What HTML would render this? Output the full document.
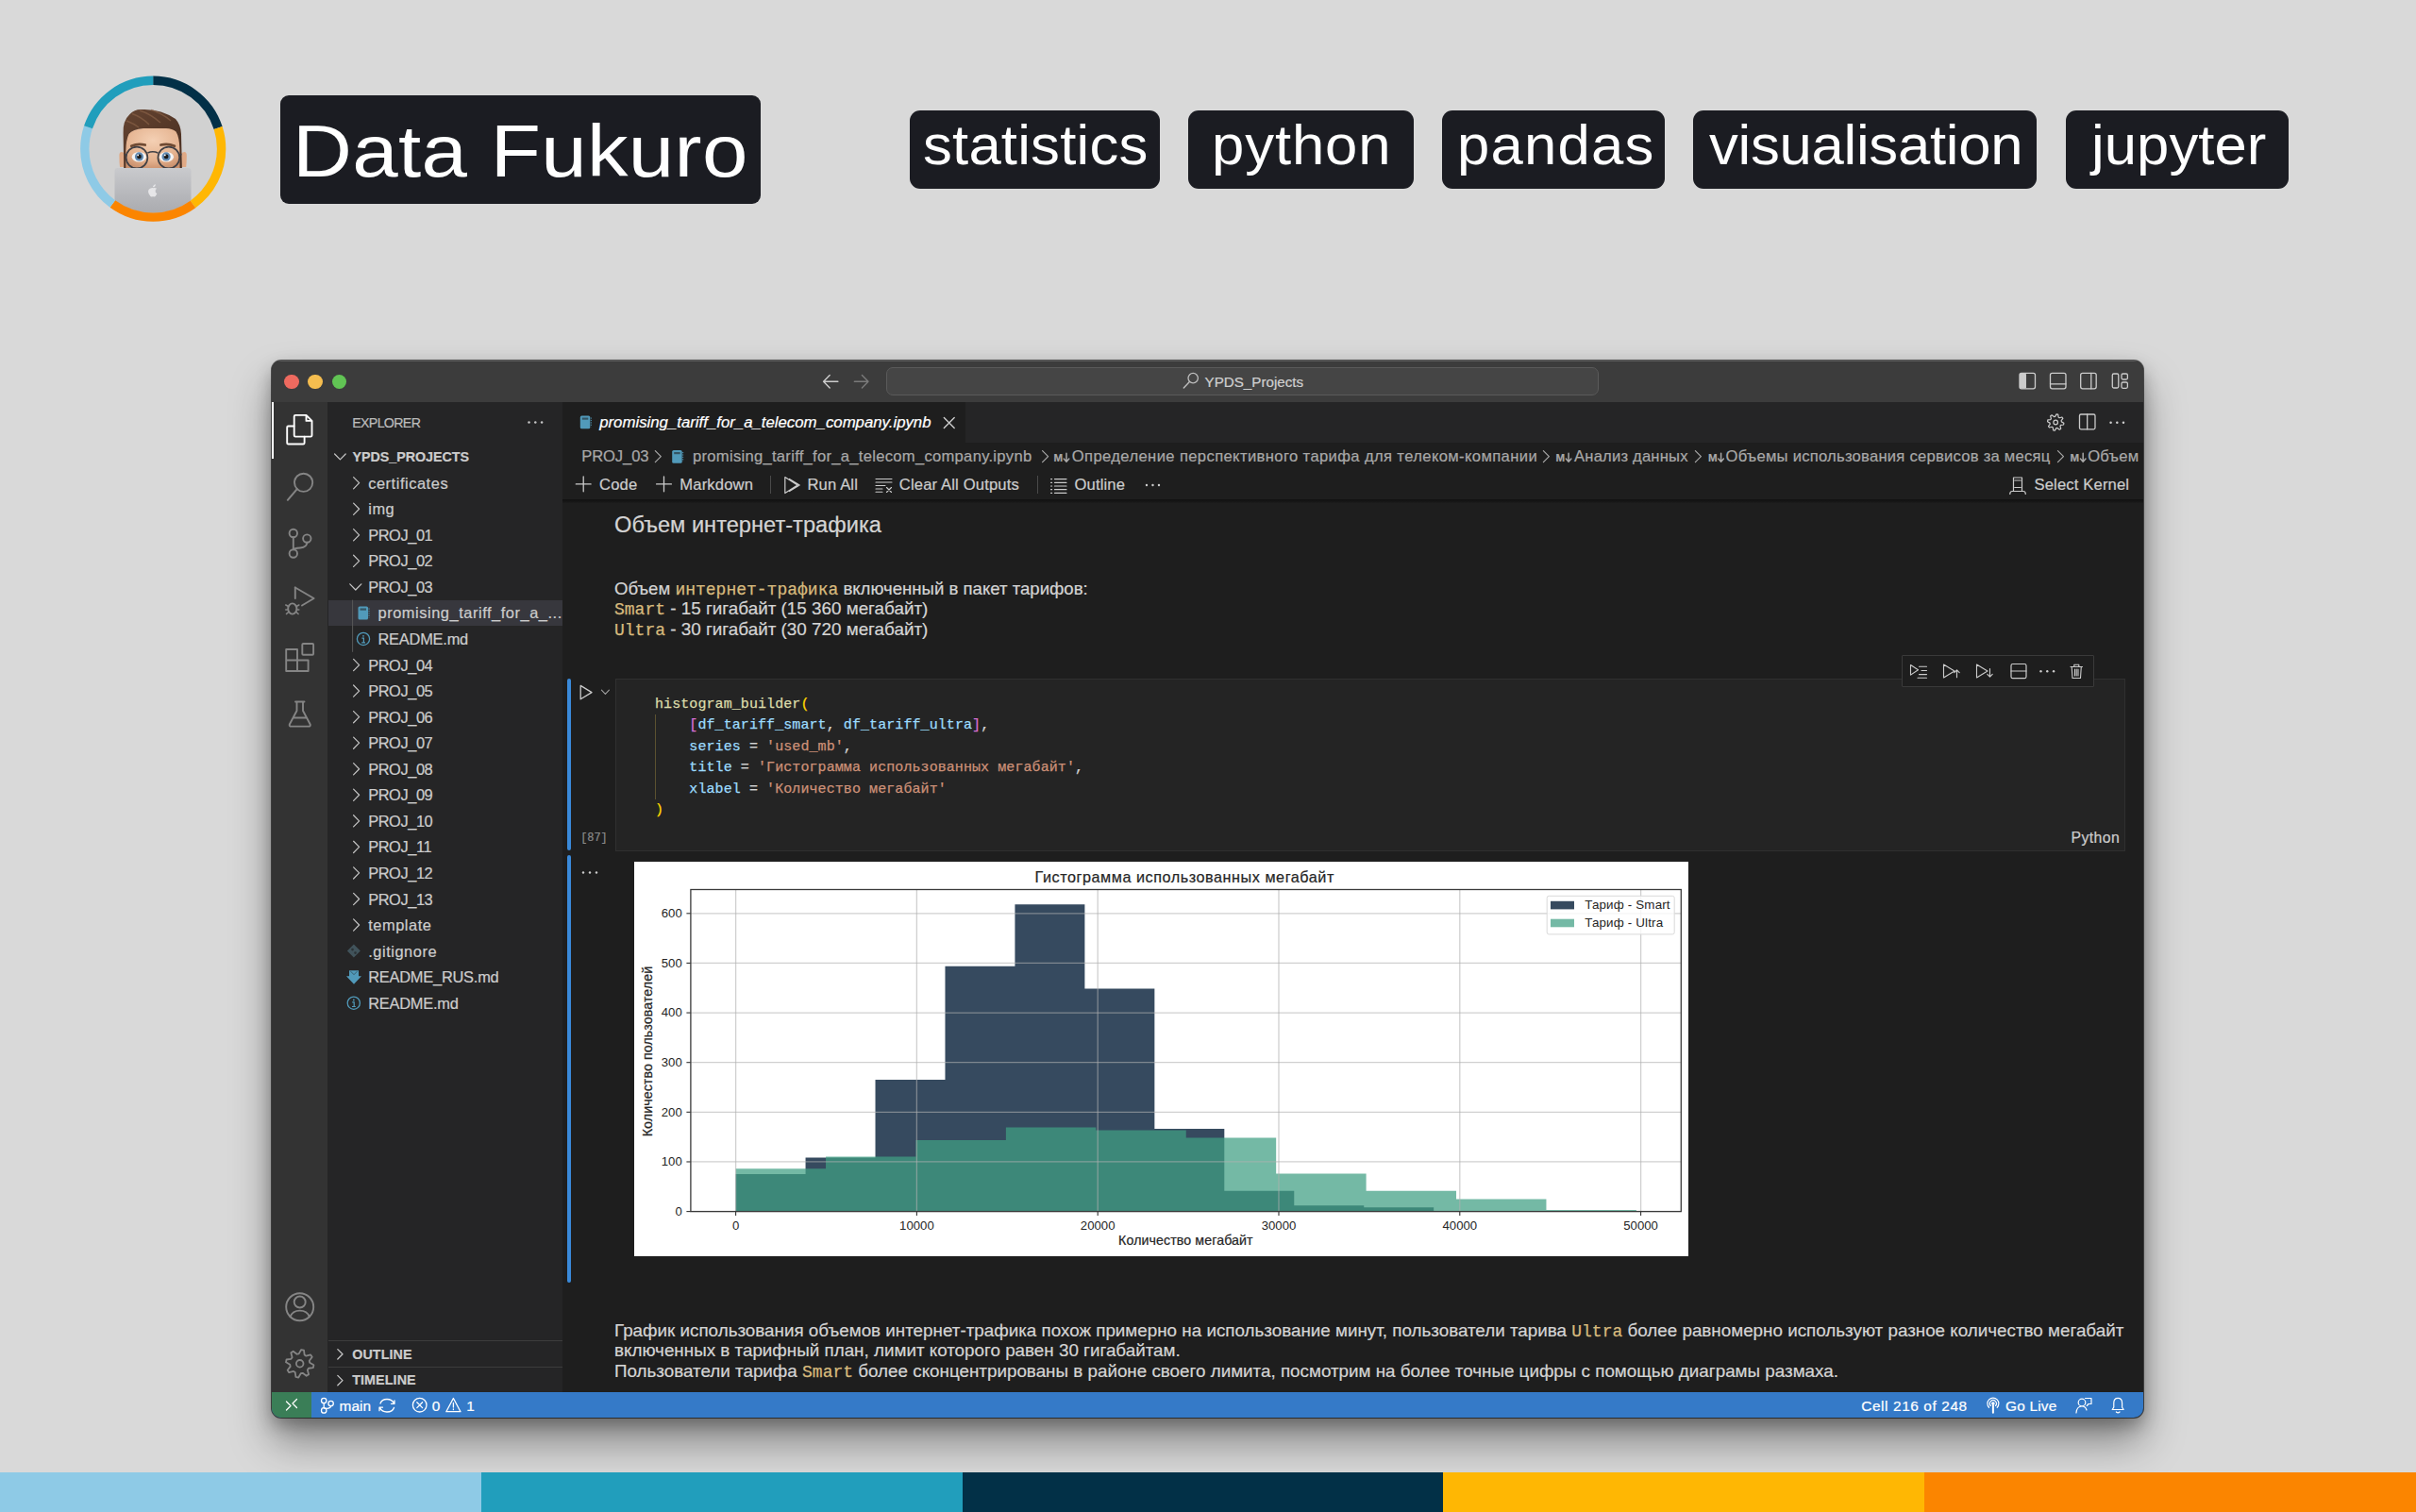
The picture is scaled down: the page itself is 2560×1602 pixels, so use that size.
<!DOCTYPE html>
<html><head><meta charset="utf-8"><title>Data Fukuro</title><style>
*{margin:0;padding:0;box-sizing:border-box}
html,body{width:2560px;height:1602px;overflow:hidden}
body{position:relative;background:#d9d9d9;font-family:'Liberation Sans', sans-serif}
.t{position:absolute;white-space:pre}
#win .t{-webkit-text-stroke:0.22px currentColor}
#win .t.nc{-webkit-text-stroke:0}
#win{position:absolute;left:288px;top:382px;width:1983.2px;height:1120.2px;border-radius:10px;overflow:hidden;background:#1e1e1e;
 box-shadow:0 0 0 1px rgba(0,0,0,0.6), 0 8px 18px rgba(0,0,0,0.28), 0 26px 44px rgba(0,0,0,0.38)}
</style></head>
<body>
<svg style="position:absolute;left:0.00px;top:0.00px;overflow:visible;" width="320" height="260" viewBox="0 0 320 260">
<defs>
 <clipPath id="avclip"><circle cx="162.2" cy="157.7" r="68"/></clipPath>
 <linearGradient id="lap" x1="0" y1="0" x2="0" y2="1"><stop offset="0" stop-color="#c9cacd"/><stop offset="0.55" stop-color="#b3b4b8"/><stop offset="1" stop-color="#a4a5a9"/></linearGradient>
 <radialGradient id="skin" cx="0.5" cy="0.3" r="0.75"><stop offset="0" stop-color="#f4d0b4"/><stop offset="0.7" stop-color="#e3b08c"/><stop offset="1" stop-color="#c98f6c"/></radialGradient>
 <linearGradient id="hair" x1="0" y1="0" x2="1" y2="1"><stop offset="0" stop-color="#654431"/><stop offset="1" stop-color="#472d20"/></linearGradient>
</defs>
<circle cx="162.2" cy="157.7" r="68" fill="#d1d1d1"/>
<g clip-path="url(#avclip)">
 <path d="M126.4 166 Q126 161 129 161 L131.5 162 L131.5 177 L127 177 Q126.4 172 126.4 166 Z" fill="#e0a985"/>
 <path d="M197.8 166 Q198.2 161 195.2 161 L192.5 162 L192.5 177 L197.2 177 Q197.8 172 197.8 166 Z" fill="#e0a985"/>
 <path d="M131.5 178 L131.5 150 Q133 137.5 152 136 L181 136 Q191 137.5 192 150 L192.5 178 Z" fill="url(#skin)"/>
 <path d="M131.2 178 L130.6 141 Q130 128 137.5 121 Q143 115.5 150 116 Q170 115 186 126 Q191.5 132 192 142 L192.8 178 L190.6 178 L190.4 158 Q190 145 186.5 139.5 Q182.5 136 176 136 L152 136 Q140.5 136.8 136.5 142 Q133.6 148 133.3 160 L133.3 178 Z" fill="url(#hair)"/>
 <path d="M140 120.5 Q150 124 158 132 M148 117 Q160 121 170 130 M160 116.5 Q172 120 181 128 M134 128 Q142 131 147 135" stroke="#8b6248" stroke-width="1.5" fill="none" opacity="0.65"/>
 <path d="M139.2 154.8 Q146 151.6 153.8 153.6" stroke="#6f4a32" stroke-width="2.6" fill="none" stroke-linecap="round"/>
 <path d="M170.4 153.6 Q178 151.6 185 154.8" stroke="#6f4a32" stroke-width="2.6" fill="none" stroke-linecap="round"/>
 <ellipse cx="147.3" cy="166.2" rx="7.6" ry="5.2" fill="#f4f4f4"/>
 <ellipse cx="176.4" cy="166.2" rx="7.6" ry="5.2" fill="#f4f4f4"/>
 <circle cx="147.5" cy="165.9" r="4.6" fill="#5f88b0"/>
 <circle cx="176.1" cy="165.9" r="4.6" fill="#5f88b0"/>
 <circle cx="147.5" cy="165.9" r="2.4" fill="#1a1a1a"/>
 <circle cx="176.1" cy="165.9" r="2.4" fill="#1a1a1a"/>
 <circle cx="146.2" cy="164.4" r="0.9" fill="#ffffff"/>
 <circle cx="174.8" cy="164.4" r="0.9" fill="#ffffff"/>
 <circle cx="145" cy="167" r="11.4" fill="none" stroke="#404045" stroke-width="1.7"/>
 <circle cx="178.8" cy="167" r="11.4" fill="none" stroke="#404045" stroke-width="1.7"/>
 <path d="M156.4 162 Q161.9 159.6 167.4 162 M133.6 164 L131.5 163.5 M190.2 164 L192.5 163.5" stroke="#404045" stroke-width="1.6" fill="none"/>
 <path d="M121.5 238 V181 Q121.5 178 124.5 178 H199.5 Q202.5 178 202.5 181 V238 Z" fill="url(#lap)"/>
 <path d="M161.8 197.5 Q163.5 195.3 165 195.2 Q165 197.2 163 198.6 Z M159 199.8 Q161.5 198.6 162.5 199.3 Q163.8 198.6 166 199.5 Q164 201.3 164.8 203.8 Q166 205 166.3 205.3 Q165 208.5 163.3 208.5 Q162.5 208 161.6 208.2 Q160.2 208.7 159.4 208 Q157 205.6 157 202.8 Q157.3 200.5 159 199.8 Z" fill="#e6e6e8"/>
</g>
<circle cx="162.2" cy="157.7" r="72.4" fill="none" stroke="#023047" stroke-width="9.4" stroke-dasharray="90.981 363.922" stroke-dashoffset="0.000" transform="rotate(-90 162.2 157.7)"/><circle cx="162.2" cy="157.7" r="72.4" fill="none" stroke="#ffb703" stroke-width="9.4" stroke-dasharray="90.981 363.922" stroke-dashoffset="-90.981" transform="rotate(-90 162.2 157.7)"/><circle cx="162.2" cy="157.7" r="72.4" fill="none" stroke="#fb8500" stroke-width="9.4" stroke-dasharray="90.981 363.922" stroke-dashoffset="-181.961" transform="rotate(-90 162.2 157.7)"/><circle cx="162.2" cy="157.7" r="72.4" fill="none" stroke="#8ecae6" stroke-width="9.4" stroke-dasharray="90.981 363.922" stroke-dashoffset="-272.942" transform="rotate(-90 162.2 157.7)"/><circle cx="162.2" cy="157.7" r="72.4" fill="none" stroke="#219ebc" stroke-width="9.4" stroke-dasharray="90.981 363.922" stroke-dashoffset="-363.922" transform="rotate(-90 162.2 157.7)"/>
</svg><div style="position:absolute;left:297.00px;top:101.00px;width:509.00px;height:115.00px;background:#1b1c22;border-radius:9px"></div><div class="t " style="left:309.60px;top:121.17px;font-size:78px;line-height:78px;color:#ffffff;font-family:'Liberation Sans', sans-serif;font-weight:normal;font-style:normal;letter-spacing:0.3px;transform:scaleX(1.116);transform-origin:0 0">Data Fukuro</div><div style="position:absolute;left:964.00px;top:117.00px;width:265.00px;height:83.00px;background:#1b1c22;border-radius:11px"></div><div class="t " style="left:978.10px;top:125.26px;font-size:59px;line-height:59px;color:#ffffff;font-family:'Liberation Sans', sans-serif;font-weight:normal;font-style:normal;letter-spacing:0.19999999999999996px;transform:scaleX(1.045);transform-origin:0 0">statistics</div><div style="position:absolute;left:1259.00px;top:117.00px;width:239.00px;height:83.00px;background:#1b1c22;border-radius:11px"></div><div class="t " style="left:1284.10px;top:125.26px;font-size:59px;line-height:59px;color:#ffffff;font-family:'Liberation Sans', sans-serif;font-weight:normal;font-style:normal;letter-spacing:0.8500000000000001px;transform:scaleX(1.045);transform-origin:0 0">python</div><div style="position:absolute;left:1528.00px;top:117.00px;width:236.00px;height:83.00px;background:#1b1c22;border-radius:11px"></div><div class="t " style="left:1543.90px;top:125.26px;font-size:59px;line-height:59px;color:#ffffff;font-family:'Liberation Sans', sans-serif;font-weight:normal;font-style:normal;letter-spacing:1.15px;transform:scaleX(1.045);transform-origin:0 0">pandas</div><div style="position:absolute;left:1794.00px;top:117.00px;width:364.00px;height:83.00px;background:#1b1c22;border-radius:11px"></div><div class="t " style="left:1811.00px;top:125.26px;font-size:59px;line-height:59px;color:#ffffff;font-family:'Liberation Sans', sans-serif;font-weight:normal;font-style:normal;letter-spacing:-0.27px;transform:scaleX(1.045);transform-origin:0 0">visualisation</div><div style="position:absolute;left:2189.00px;top:117.00px;width:236.00px;height:83.00px;background:#1b1c22;border-radius:11px"></div><div class="t " style="left:2216.00px;top:125.26px;font-size:59px;line-height:59px;color:#ffffff;font-family:'Liberation Sans', sans-serif;font-weight:normal;font-style:normal;letter-spacing:0.050000000000000044px;transform:scaleX(1.045);transform-origin:0 0">jupyter</div>
<div id="win">
<div style="position:absolute;left:0.00px;top:0.00px;width:1983.20px;height:43.50px;background:#3c3c3c"></div><div style="position:absolute;left:0.00px;top:0.00px;width:1983.20px;height:1.20px;background:#5c5c5c"></div><div style="position:absolute;left:13.40px;top:14.50px;width:15.40px;height:15.40px;background:#ee6a5f;border-radius:50%"></div><div style="position:absolute;left:38.30px;top:14.50px;width:15.40px;height:15.40px;background:#f5bd4f;border-radius:50%"></div><div style="position:absolute;left:63.50px;top:14.50px;width:15.40px;height:15.40px;background:#61c454;border-radius:50%"></div><div style="position:absolute;left:0.00px;top:43.50px;width:60.00px;height:1049.50px;background:#333333"></div><div style="position:absolute;left:-0.30px;top:43.50px;width:2.50px;height:60.00px;background:#ffffff"></div><div style="position:absolute;left:59.00px;top:43.50px;width:249.00px;height:1049.50px;background:#252526"></div><div style="position:absolute;left:308.00px;top:43.50px;width:1675.20px;height:1049.50px;background:#1e1e1e"></div><div style="position:absolute;left:308.00px;top:43.50px;width:1675.20px;height:43.75px;background:#252526"></div><div style="position:absolute;left:308.00px;top:43.50px;width:427.00px;height:43.75px;background:#1e1e1e"></div><div style="position:absolute;left:0.00px;top:1093.00px;width:1983.20px;height:27.20px;background:#357ac8"></div><div style="position:absolute;left:0.00px;top:1093.00px;width:42.00px;height:27.20px;background:#3a7e57"></div><div style="position:absolute;left:651.00px;top:6.90px;width:755.00px;height:29.80px;background:#454545;border:1px solid #5a5a5a;border-radius:7px"></div><div class="t " style="left:988.50px;top:14.73px;font-size:15.2px;line-height:15.2px;color:#cfcfcf;font-family:'Liberation Sans', sans-serif;font-weight:normal;font-style:normal;letter-spacing:0px;">YPDS_Projects</div><div class="t " style="left:85.20px;top:59.08px;font-size:14.2px;line-height:14.2px;color:#bbbbbb;font-family:'Liberation Sans', sans-serif;font-weight:normal;font-style:normal;letter-spacing:-0.65px;">EXPLORER</div><div class="t " style="left:85.60px;top:94.80px;font-size:14.3px;line-height:14.3px;color:#cccccc;font-family:'Liberation Sans', sans-serif;font-weight:bold;font-style:normal;letter-spacing:-0.05px;">YPDS_PROJECTS</div><div style="position:absolute;left:60.00px;top:253.65px;width:248.00px;height:27.60px;background:#37373d"></div><div class="t " style="left:102.20px;top:121.72px;font-size:16.4px;line-height:16.4px;color:#cccccc;font-family:'Liberation Sans', sans-serif;font-weight:normal;font-style:normal;letter-spacing:0.55px;">certificates</div><div class="t " style="left:102.20px;top:149.27px;font-size:16.4px;line-height:16.4px;color:#cccccc;font-family:'Liberation Sans', sans-serif;font-weight:normal;font-style:normal;letter-spacing:0.55px;">img</div><div class="t " style="left:102.20px;top:176.82px;font-size:16.4px;line-height:16.4px;color:#cccccc;font-family:'Liberation Sans', sans-serif;font-weight:normal;font-style:normal;letter-spacing:-0.42px;">PROJ_01</div><div class="t " style="left:102.20px;top:204.37px;font-size:16.4px;line-height:16.4px;color:#cccccc;font-family:'Liberation Sans', sans-serif;font-weight:normal;font-style:normal;letter-spacing:-0.42px;">PROJ_02</div><div class="t " style="left:102.20px;top:231.92px;font-size:16.4px;line-height:16.4px;color:#cccccc;font-family:'Liberation Sans', sans-serif;font-weight:normal;font-style:normal;letter-spacing:-0.42px;">PROJ_03</div><div class="t " style="left:112.50px;top:259.47px;font-size:16.4px;line-height:16.4px;color:#cccccc;font-family:'Liberation Sans', sans-serif;font-weight:normal;font-style:normal;letter-spacing:0.55px;">promising_tariff_for_a_...</div><div class="t " style="left:112.50px;top:287.02px;font-size:16.4px;line-height:16.4px;color:#cccccc;font-family:'Liberation Sans', sans-serif;font-weight:normal;font-style:normal;letter-spacing:-0.22px;">README.md</div><div class="t " style="left:102.20px;top:314.57px;font-size:16.4px;line-height:16.4px;color:#cccccc;font-family:'Liberation Sans', sans-serif;font-weight:normal;font-style:normal;letter-spacing:-0.42px;">PROJ_04</div><div class="t " style="left:102.20px;top:342.12px;font-size:16.4px;line-height:16.4px;color:#cccccc;font-family:'Liberation Sans', sans-serif;font-weight:normal;font-style:normal;letter-spacing:-0.42px;">PROJ_05</div><div class="t " style="left:102.20px;top:369.67px;font-size:16.4px;line-height:16.4px;color:#cccccc;font-family:'Liberation Sans', sans-serif;font-weight:normal;font-style:normal;letter-spacing:-0.42px;">PROJ_06</div><div class="t " style="left:102.20px;top:397.22px;font-size:16.4px;line-height:16.4px;color:#cccccc;font-family:'Liberation Sans', sans-serif;font-weight:normal;font-style:normal;letter-spacing:-0.42px;">PROJ_07</div><div class="t " style="left:102.20px;top:424.77px;font-size:16.4px;line-height:16.4px;color:#cccccc;font-family:'Liberation Sans', sans-serif;font-weight:normal;font-style:normal;letter-spacing:-0.42px;">PROJ_08</div><div class="t " style="left:102.20px;top:452.32px;font-size:16.4px;line-height:16.4px;color:#cccccc;font-family:'Liberation Sans', sans-serif;font-weight:normal;font-style:normal;letter-spacing:-0.42px;">PROJ_09</div><div class="t " style="left:102.20px;top:479.87px;font-size:16.4px;line-height:16.4px;color:#cccccc;font-family:'Liberation Sans', sans-serif;font-weight:normal;font-style:normal;letter-spacing:-0.42px;">PROJ_10</div><div class="t " style="left:102.20px;top:507.42px;font-size:16.4px;line-height:16.4px;color:#cccccc;font-family:'Liberation Sans', sans-serif;font-weight:normal;font-style:normal;letter-spacing:-0.42px;">PROJ_11</div><div class="t " style="left:102.20px;top:534.97px;font-size:16.4px;line-height:16.4px;color:#cccccc;font-family:'Liberation Sans', sans-serif;font-weight:normal;font-style:normal;letter-spacing:-0.42px;">PROJ_12</div><div class="t " style="left:102.20px;top:562.52px;font-size:16.4px;line-height:16.4px;color:#cccccc;font-family:'Liberation Sans', sans-serif;font-weight:normal;font-style:normal;letter-spacing:-0.42px;">PROJ_13</div><div class="t " style="left:102.20px;top:590.07px;font-size:16.4px;line-height:16.4px;color:#cccccc;font-family:'Liberation Sans', sans-serif;font-weight:normal;font-style:normal;letter-spacing:0.55px;">template</div><div class="t " style="left:102.20px;top:617.62px;font-size:16.4px;line-height:16.4px;color:#cccccc;font-family:'Liberation Sans', sans-serif;font-weight:normal;font-style:normal;letter-spacing:0.55px;">.gitignore</div><div class="t " style="left:102.20px;top:645.17px;font-size:16.4px;line-height:16.4px;color:#cccccc;font-family:'Liberation Sans', sans-serif;font-weight:normal;font-style:normal;letter-spacing:-0.22px;">README_RUS.md</div><div class="t " style="left:102.20px;top:672.72px;font-size:16.4px;line-height:16.4px;color:#cccccc;font-family:'Liberation Sans', sans-serif;font-weight:normal;font-style:normal;letter-spacing:-0.22px;">README.md</div><div style="position:absolute;left:60.00px;top:1038.00px;width:248.00px;height:1.00px;background:#3c3c3c"></div><div style="position:absolute;left:60.00px;top:1066.00px;width:248.00px;height:1.00px;background:#3c3c3c"></div><div class="t " style="left:85.20px;top:1045.70px;font-size:14.3px;line-height:14.3px;color:#cccccc;font-family:'Liberation Sans', sans-serif;font-weight:bold;font-style:normal;letter-spacing:0.1px;">OUTLINE</div><div class="t " style="left:85.20px;top:1073.40px;font-size:14.3px;line-height:14.3px;color:#cccccc;font-family:'Liberation Sans', sans-serif;font-weight:bold;font-style:normal;letter-spacing:0.1px;">TIMELINE</div><div class="t " style="left:347.20px;top:58.08px;font-size:16.8px;line-height:16.8px;color:#ffffff;font-family:'Liberation Sans', sans-serif;font-weight:normal;font-style:italic;letter-spacing:0.0px;">promising_tariff_for_a_telecom_company.ipynb</div><div class="t " style="left:328.20px;top:93.75px;font-size:16.6px;line-height:16.6px;color:#a8a8a8;font-family:'Liberation Sans', sans-serif;font-weight:normal;font-style:normal;letter-spacing:-0.1px;">PROJ_03</div><div class="t " style="left:446.00px;top:93.75px;font-size:16.6px;line-height:16.6px;color:#a8a8a8;font-family:'Liberation Sans', sans-serif;font-weight:normal;font-style:normal;letter-spacing:0.28px;">promising_tariff_for_a_telecom_company.ipynb</div><div class="t " style="left:828.40px;top:97.57px;font-size:11.5px;line-height:11.5px;color:#a8a8a8;font-family:'Liberation Sans', sans-serif;font-weight:bold;font-style:normal;letter-spacing:0px;">M</div><div class="t " style="left:847.80px;top:93.75px;font-size:16.6px;line-height:16.6px;color:#a8a8a8;font-family:'Liberation Sans', sans-serif;font-weight:normal;font-style:normal;letter-spacing:0.38px;">Определение перспективного тарифа для телеком-компании</div><div class="t " style="left:1360.50px;top:97.57px;font-size:11.5px;line-height:11.5px;color:#a8a8a8;font-family:'Liberation Sans', sans-serif;font-weight:bold;font-style:normal;letter-spacing:0px;">M</div><div class="t " style="left:1380.00px;top:93.75px;font-size:16.6px;line-height:16.6px;color:#a8a8a8;font-family:'Liberation Sans', sans-serif;font-weight:normal;font-style:normal;letter-spacing:0.2px;">Анализ данных</div><div class="t " style="left:1522.00px;top:97.57px;font-size:11.5px;line-height:11.5px;color:#a8a8a8;font-family:'Liberation Sans', sans-serif;font-weight:bold;font-style:normal;letter-spacing:0px;">M</div><div class="t " style="left:1540.50px;top:93.75px;font-size:16.6px;line-height:16.6px;color:#a8a8a8;font-family:'Liberation Sans', sans-serif;font-weight:normal;font-style:normal;letter-spacing:0.25px;">Объемы использования сервисов за месяц</div><div class="t " style="left:1905.60px;top:97.57px;font-size:11.5px;line-height:11.5px;color:#a8a8a8;font-family:'Liberation Sans', sans-serif;font-weight:bold;font-style:normal;letter-spacing:0px;">M</div><div class="t " style="left:1924.20px;top:93.75px;font-size:16.6px;line-height:16.6px;color:#a8a8a8;font-family:'Liberation Sans', sans-serif;font-weight:normal;font-style:normal;letter-spacing:0.25px;">Объем</div><div class="t " style="left:347.00px;top:123.85px;font-size:16.6px;line-height:16.6px;color:#cccccc;font-family:'Liberation Sans', sans-serif;font-weight:normal;font-style:normal;letter-spacing:0.15px;">Code</div><div class="t " style="left:432.30px;top:123.85px;font-size:16.6px;line-height:16.6px;color:#cccccc;font-family:'Liberation Sans', sans-serif;font-weight:normal;font-style:normal;letter-spacing:0.15px;">Markdown</div><div style="position:absolute;left:527.70px;top:122.00px;width:1.20px;height:19.00px;background:#4a4a4a"></div><div class="t " style="left:567.40px;top:123.85px;font-size:16.6px;line-height:16.6px;color:#cccccc;font-family:'Liberation Sans', sans-serif;font-weight:normal;font-style:normal;letter-spacing:0.15px;">Run All</div><div class="t " style="left:664.80px;top:123.85px;font-size:16.6px;line-height:16.6px;color:#cccccc;font-family:'Liberation Sans', sans-serif;font-weight:normal;font-style:normal;letter-spacing:0.15px;">Clear All Outputs</div><div style="position:absolute;left:810.80px;top:122.00px;width:1.20px;height:19.00px;background:#4a4a4a"></div><div class="t " style="left:850.50px;top:123.85px;font-size:16.6px;line-height:16.6px;color:#cccccc;font-family:'Liberation Sans', sans-serif;font-weight:normal;font-style:normal;letter-spacing:0.15px;">Outline</div><div class="t " style="left:1867.50px;top:123.85px;font-size:16.6px;line-height:16.6px;color:#cccccc;font-family:'Liberation Sans', sans-serif;font-weight:normal;font-style:normal;letter-spacing:0.15px;">Select Kernel</div><div style="position:absolute;left:308.00px;top:147.00px;width:1675.20px;height:4.00px;background:linear-gradient(#121212,#161616 60%,#1c1c1c)"></div><div class="t " style="left:363.00px;top:162.88px;font-size:23.65px;line-height:23.65px;color:#d4d4d4;font-family:'Liberation Sans', sans-serif;font-weight:normal;font-style:normal;letter-spacing:0.0px;">Объем интернет-трафика</div><div class="t " style="left:363.00px;top:232.96px;font-size:18.6px;line-height:18.6px;color:#d4d4d4;font-family:'Liberation Sans', sans-serif;font-weight:normal;font-style:normal;letter-spacing:0.0px;">Объем <span style="font-family:'Liberation Mono', monospace;color:#d7ba7d;font-size:18px;-webkit-text-stroke:0.25px #d7ba7d">интернет-трафика</span> включенный в пакет тарифов:</div><div class="t " style="left:363.00px;top:254.24px;font-size:18.85px;line-height:18.85px;color:#d4d4d4;font-family:'Liberation Sans', sans-serif;font-weight:normal;font-style:normal;letter-spacing:0.0px;"><span style="font-family:'Liberation Mono', monospace;color:#d7ba7d;font-size:18px;-webkit-text-stroke:0.25px #d7ba7d">Smart</span> - 15 гигабайт (15 360 мегабайт)</div><div class="t " style="left:363.00px;top:275.64px;font-size:18.85px;line-height:18.85px;color:#d4d4d4;font-family:'Liberation Sans', sans-serif;font-weight:normal;font-style:normal;letter-spacing:0.0px;"><span style="font-family:'Liberation Mono', monospace;color:#d7ba7d;font-size:18px;-webkit-text-stroke:0.25px #d7ba7d">Ultra</span> - 30 гигабайт (30 720 мегабайт)</div><div style="position:absolute;left:312.90px;top:337.30px;width:4.00px;height:182.00px;background:#3a89d9;border-radius:2px"></div><div style="position:absolute;left:312.90px;top:524.00px;width:4.00px;height:452.50px;background:#3a89d9;border-radius:2px"></div><div style="position:absolute;left:363.90px;top:337.30px;width:1600.10px;height:182.30px;background:#242424;border:1px solid #303030"></div><div style="position:absolute;left:1726.60px;top:312.30px;width:204.80px;height:34.10px;background:#1e1e1e;border:1px solid #3a3a3a;border-radius:1px"></div><div class="t " style="left:327.20px;top:501.08px;font-size:11.9px;line-height:11.9px;color:#8b8b8b;font-family:'Liberation Mono', monospace;font-weight:normal;font-style:normal;letter-spacing:0px;">[87]</div><div class="t " style="left:1906.60px;top:498.23px;font-size:15.8px;line-height:15.8px;color:#cccccc;font-family:'Liberation Sans', sans-serif;font-weight:normal;font-style:normal;letter-spacing:0.4px;">Python</div><div class="t " style="left:406.00px;top:356.90px;font-size:15px;line-height:15px;color:#d4d4d4;font-family:'Liberation Mono', monospace;font-weight:normal;font-style:normal;letter-spacing:0.08px;"><span style="color:#dcdcaa;-webkit-text-stroke:0.25px #dcdcaa">histogram_builder</span><span style="color:#ffd700;-webkit-text-stroke:0.25px #ffd700">(</span></div><div class="t " style="left:406.00px;top:379.36px;font-size:15px;line-height:15px;color:#d4d4d4;font-family:'Liberation Mono', monospace;font-weight:normal;font-style:normal;letter-spacing:0.08px;"><span style="color:#d4d4d4;-webkit-text-stroke:0.25px #d4d4d4">    </span><span style="color:#da70d6;-webkit-text-stroke:0.25px #da70d6">[</span><span style="color:#9cdcfe;-webkit-text-stroke:0.25px #9cdcfe">df_tariff_smart</span><span style="color:#d4d4d4;-webkit-text-stroke:0.25px #d4d4d4">, </span><span style="color:#9cdcfe;-webkit-text-stroke:0.25px #9cdcfe">df_tariff_ultra</span><span style="color:#da70d6;-webkit-text-stroke:0.25px #da70d6">]</span><span style="color:#d4d4d4;-webkit-text-stroke:0.25px #d4d4d4">,</span></div><div class="t " style="left:406.00px;top:401.82px;font-size:15px;line-height:15px;color:#d4d4d4;font-family:'Liberation Mono', monospace;font-weight:normal;font-style:normal;letter-spacing:0.08px;"><span style="color:#d4d4d4;-webkit-text-stroke:0.25px #d4d4d4">    </span><span style="color:#9cdcfe;-webkit-text-stroke:0.25px #9cdcfe">series</span><span style="color:#d4d4d4;-webkit-text-stroke:0.25px #d4d4d4"> = </span><span style="color:#ce9178;-webkit-text-stroke:0.25px #ce9178">'used_mb'</span><span style="color:#d4d4d4;-webkit-text-stroke:0.25px #d4d4d4">,</span></div><div class="t " style="left:406.00px;top:424.28px;font-size:15px;line-height:15px;color:#d4d4d4;font-family:'Liberation Mono', monospace;font-weight:normal;font-style:normal;letter-spacing:0.08px;"><span style="color:#d4d4d4;-webkit-text-stroke:0.25px #d4d4d4">    </span><span style="color:#9cdcfe;-webkit-text-stroke:0.25px #9cdcfe">title</span><span style="color:#d4d4d4;-webkit-text-stroke:0.25px #d4d4d4"> = </span><span style="color:#ce9178;-webkit-text-stroke:0.25px #ce9178">'Гистограмма использованных мегабайт'</span><span style="color:#d4d4d4;-webkit-text-stroke:0.25px #d4d4d4">,</span></div><div class="t " style="left:406.00px;top:446.74px;font-size:15px;line-height:15px;color:#d4d4d4;font-family:'Liberation Mono', monospace;font-weight:normal;font-style:normal;letter-spacing:0.08px;"><span style="color:#d4d4d4;-webkit-text-stroke:0.25px #d4d4d4">    </span><span style="color:#9cdcfe;-webkit-text-stroke:0.25px #9cdcfe">xlabel</span><span style="color:#d4d4d4;-webkit-text-stroke:0.25px #d4d4d4"> = </span><span style="color:#ce9178;-webkit-text-stroke:0.25px #ce9178">'Количество мегабайт'</span></div><div class="t " style="left:406.00px;top:469.20px;font-size:15px;line-height:15px;color:#d4d4d4;font-family:'Liberation Mono', monospace;font-weight:normal;font-style:normal;letter-spacing:0.08px;"><span style="color:#ffd700;-webkit-text-stroke:0.25px #ffd700">)</span></div><div style="position:absolute;left:406.30px;top:375.00px;width:1.00px;height:89.50px;background:#5c5230"></div><div style="position:absolute;left:384.20px;top:531.10px;width:1117.00px;height:417.60px;background:#ffffff"></div><div class="t " style="left:363.00px;top:1018.67px;font-size:18.82px;line-height:18.82px;color:#d4d4d4;font-family:'Liberation Sans', sans-serif;font-weight:normal;font-style:normal;letter-spacing:0.0px;">График использования объемов интернет-трафика похож примерно на использование минут, пользователи тарива <span style="font-family:'Liberation Mono', monospace;color:#d7ba7d;font-size:18px;-webkit-text-stroke:0.25px #d7ba7d">Ultra</span> более равномерно используют разное количество мегабайт</div><div class="t " style="left:363.00px;top:1040.17px;font-size:18.82px;line-height:18.82px;color:#d4d4d4;font-family:'Liberation Sans', sans-serif;font-weight:normal;font-style:normal;letter-spacing:0.0px;">включенных в тарифный план, лимит которого равен 30 гигабайтам.</div><div class="t " style="left:363.00px;top:1061.87px;font-size:18.82px;line-height:18.82px;color:#d4d4d4;font-family:'Liberation Sans', sans-serif;font-weight:normal;font-style:normal;letter-spacing:0.0px;">Пользователи тарифа <span style="font-family:'Liberation Mono', monospace;color:#d7ba7d;font-size:18px;-webkit-text-stroke:0.25px #d7ba7d">Smart</span> более сконцентрированы в районе своего лимита, посмотрим на более точные цифры с помощью диаграмы размаха.</div><div class="t " style="left:71.50px;top:1099.56px;font-size:15.4px;line-height:15.4px;color:#ffffff;font-family:'Liberation Sans', sans-serif;font-weight:normal;font-style:normal;letter-spacing:0.1px;">main</div><div class="t " style="left:169.80px;top:1099.56px;font-size:15.4px;line-height:15.4px;color:#ffffff;font-family:'Liberation Sans', sans-serif;font-weight:normal;font-style:normal;letter-spacing:0px;">0</div><div class="t " style="left:206.20px;top:1099.56px;font-size:15.4px;line-height:15.4px;color:#ffffff;font-family:'Liberation Sans', sans-serif;font-weight:normal;font-style:normal;letter-spacing:0px;">1</div><div class="t " style="left:1684.20px;top:1099.56px;font-size:15.4px;line-height:15.4px;color:#ffffff;font-family:'Liberation Sans', sans-serif;font-weight:normal;font-style:normal;letter-spacing:0.6px;">Cell 216 of 248</div><div class="t " style="left:1837.00px;top:1099.56px;font-size:15.4px;line-height:15.4px;color:#ffffff;font-family:'Liberation Sans', sans-serif;font-weight:normal;font-style:normal;letter-spacing:0.2px;">Go Live</div><div class="t nc" style="left:434.80px;top:895.03px;font-size:13.2px;line-height:13.2px;color:#262626;font-family:'Liberation Sans', sans-serif;font-weight:normal;font-style:normal;letter-spacing:0px;transform:translateX(-100%)">0</div><div class="t nc" style="left:434.80px;top:842.39px;font-size:13.2px;line-height:13.2px;color:#262626;font-family:'Liberation Sans', sans-serif;font-weight:normal;font-style:normal;letter-spacing:0px;transform:translateX(-100%)">100</div><div class="t nc" style="left:434.80px;top:789.76px;font-size:13.2px;line-height:13.2px;color:#262626;font-family:'Liberation Sans', sans-serif;font-weight:normal;font-style:normal;letter-spacing:0px;transform:translateX(-100%)">200</div><div class="t nc" style="left:434.80px;top:737.13px;font-size:13.2px;line-height:13.2px;color:#262626;font-family:'Liberation Sans', sans-serif;font-weight:normal;font-style:normal;letter-spacing:0px;transform:translateX(-100%)">300</div><div class="t nc" style="left:434.80px;top:684.49px;font-size:13.2px;line-height:13.2px;color:#262626;font-family:'Liberation Sans', sans-serif;font-weight:normal;font-style:normal;letter-spacing:0px;transform:translateX(-100%)">400</div><div class="t nc" style="left:434.80px;top:631.86px;font-size:13.2px;line-height:13.2px;color:#262626;font-family:'Liberation Sans', sans-serif;font-weight:normal;font-style:normal;letter-spacing:0px;transform:translateX(-100%)">500</div><div class="t nc" style="left:434.80px;top:579.23px;font-size:13.2px;line-height:13.2px;color:#262626;font-family:'Liberation Sans', sans-serif;font-weight:normal;font-style:normal;letter-spacing:0px;transform:translateX(-100%)">600</div><div class="t nc" style="left:491.60px;top:909.83px;font-size:13.2px;line-height:13.2px;color:#262626;font-family:'Liberation Sans', sans-serif;font-weight:normal;font-style:normal;letter-spacing:0px;transform:translateX(-50%)">0</div><div class="t nc" style="left:683.40px;top:909.83px;font-size:13.2px;line-height:13.2px;color:#262626;font-family:'Liberation Sans', sans-serif;font-weight:normal;font-style:normal;letter-spacing:0px;transform:translateX(-50%)">10000</div><div class="t nc" style="left:875.20px;top:909.83px;font-size:13.2px;line-height:13.2px;color:#262626;font-family:'Liberation Sans', sans-serif;font-weight:normal;font-style:normal;letter-spacing:0px;transform:translateX(-50%)">20000</div><div class="t nc" style="left:1067.00px;top:909.83px;font-size:13.2px;line-height:13.2px;color:#262626;font-family:'Liberation Sans', sans-serif;font-weight:normal;font-style:normal;letter-spacing:0px;transform:translateX(-50%)">30000</div><div class="t nc" style="left:1258.80px;top:909.83px;font-size:13.2px;line-height:13.2px;color:#262626;font-family:'Liberation Sans', sans-serif;font-weight:normal;font-style:normal;letter-spacing:0px;transform:translateX(-50%)">40000</div><div class="t nc" style="left:1450.60px;top:909.83px;font-size:13.2px;line-height:13.2px;color:#262626;font-family:'Liberation Sans', sans-serif;font-weight:normal;font-style:normal;letter-spacing:0px;transform:translateX(-50%)">50000</div><svg style="position:absolute;left:0;top:0" width="1983.2" height="1120.2" viewBox="288 382 1983.2 1120.2"><path d="M779.60 1283.6 V1244.02 H853.56 V1226.55 H927.52 V1143.91 H1001.48 V1023.70 H1075.44 V958.22 H1149.40 V1047.54 H1223.36 V1196.02 H1297.32 V1261.81 H1371.28 V1277.18 H1445.24 V1279.23 H1519.20 V1283.6 Z" fill="#364a5f"/><path d="M779.60 1283.6 V1238.18 H875.03 V1225.39 H970.46 V1207.91 H1065.89 V1194.54 H1161.32 V1197.44 H1256.75 V1205.60 H1352.18 V1243.44 H1447.61 V1261.81 H1543.04 V1270.49 H1638.47 V1282.13 H1733.90 V1283.6 Z" fill="rgb(65,159,132)" fill-opacity="0.73"/><path d="M731.9 1283.60 H1781.3" stroke="#b0b0b0" stroke-opacity="0.6" stroke-width="1.3"/><path d="M727.4 1283.60 H731.9" stroke="#333" stroke-width="1.1"/><path d="M731.9 1230.97 H1781.3" stroke="#b0b0b0" stroke-opacity="0.6" stroke-width="1.3"/><path d="M727.4 1230.97 H731.9" stroke="#333" stroke-width="1.1"/><path d="M731.9 1178.33 H1781.3" stroke="#b0b0b0" stroke-opacity="0.6" stroke-width="1.3"/><path d="M727.4 1178.33 H731.9" stroke="#333" stroke-width="1.1"/><path d="M731.9 1125.70 H1781.3" stroke="#b0b0b0" stroke-opacity="0.6" stroke-width="1.3"/><path d="M727.4 1125.70 H731.9" stroke="#333" stroke-width="1.1"/><path d="M731.9 1073.07 H1781.3" stroke="#b0b0b0" stroke-opacity="0.6" stroke-width="1.3"/><path d="M727.4 1073.07 H731.9" stroke="#333" stroke-width="1.1"/><path d="M731.9 1020.43 H1781.3" stroke="#b0b0b0" stroke-opacity="0.6" stroke-width="1.3"/><path d="M727.4 1020.43 H731.9" stroke="#333" stroke-width="1.1"/><path d="M731.9 967.80 H1781.3" stroke="#b0b0b0" stroke-opacity="0.6" stroke-width="1.3"/><path d="M727.4 967.80 H731.9" stroke="#333" stroke-width="1.1"/><path d="M779.60 942.5 V1283.6" stroke="#b0b0b0" stroke-opacity="0.6" stroke-width="1.3"/><path d="M779.60 1283.6 V1288.1" stroke="#333" stroke-width="1.1"/><path d="M971.40 942.5 V1283.6" stroke="#b0b0b0" stroke-opacity="0.6" stroke-width="1.3"/><path d="M971.40 1283.6 V1288.1" stroke="#333" stroke-width="1.1"/><path d="M1163.20 942.5 V1283.6" stroke="#b0b0b0" stroke-opacity="0.6" stroke-width="1.3"/><path d="M1163.20 1283.6 V1288.1" stroke="#333" stroke-width="1.1"/><path d="M1355.00 942.5 V1283.6" stroke="#b0b0b0" stroke-opacity="0.6" stroke-width="1.3"/><path d="M1355.00 1283.6 V1288.1" stroke="#333" stroke-width="1.1"/><path d="M1546.80 942.5 V1283.6" stroke="#b0b0b0" stroke-opacity="0.6" stroke-width="1.3"/><path d="M1546.80 1283.6 V1288.1" stroke="#333" stroke-width="1.1"/><path d="M1738.60 942.5 V1283.6" stroke="#b0b0b0" stroke-opacity="0.6" stroke-width="1.3"/><path d="M1738.60 1283.6 V1288.1" stroke="#333" stroke-width="1.1"/><rect x="731.9" y="942.5" width="1049.4" height="341.0999999999999" fill="none" stroke="#3a3a3a" stroke-width="1.3"/><rect x="1639.2" y="949.3" width="135" height="40.6" rx="2" fill="#ffffff" fill-opacity="0.8" stroke="#d9d9d9" stroke-width="1"/><rect x="1643" y="954.8" width="25" height="8.6" fill="#364a5f"/><rect x="1643" y="973.7" width="25" height="8.6" fill="rgb(65,159,132)" fill-opacity="0.73"/></svg><div class="t nc" style="left:1391.20px;top:570.26px;font-size:13.4px;line-height:13.4px;color:#262626;font-family:'Liberation Sans', sans-serif;font-weight:normal;font-style:normal;letter-spacing:0.15px;">Тариф - Smart</div><div class="t nc" style="left:1391.20px;top:589.16px;font-size:13.4px;line-height:13.4px;color:#262626;font-family:'Liberation Sans', sans-serif;font-weight:normal;font-style:normal;letter-spacing:0.15px;">Тариф - Ultra</div><div class="t " style="left:967.20px;top:538.69px;font-size:16.2px;line-height:16.2px;color:#262626;font-family:'Liberation Sans', sans-serif;font-weight:normal;font-style:normal;letter-spacing:0.55px;transform:translateX(-50%)">Гистограмма использованных мегабайт</div><div class="t " style="left:968.40px;top:925.18px;font-size:14.2px;line-height:14.2px;color:#262626;font-family:'Liberation Sans', sans-serif;font-weight:normal;font-style:normal;letter-spacing:0.1px;transform:translateX(-50%)">Количество мегабайт</div><div class="t " style="left:397.50px;top:731.90px;font-size:14.2px;line-height:14.2px;color:#262626;font-family:'Liberation Sans', sans-serif;font-weight:normal;font-style:normal;letter-spacing:0.1px;transform:translate(-50%,-50%) rotate(-90deg);transform-origin:50% 50%">Количество пользователей</div><svg style="position:absolute;left:0;top:0" width="1983.2" height="1120.2" viewBox="288 382 1983.2 1120.2"><path d="M887.9 404.2 H873 M879.2 397.4 L872.6 404.2 L879.2 411" fill="none" stroke="#cccccc" stroke-width="1.4" stroke-linecap="round" stroke-linejoin="round"/><path d="M905.3 404.2 H920 M913.4 397.4 L920 404.2 L913.4 411" fill="none" stroke="#7a7a7a" stroke-width="1.4" stroke-linecap="round" stroke-linejoin="round"/><circle cx="1264.2" cy="400.6" r="5.2" fill="none" stroke="#bdbdbd" stroke-width="1.3" stroke-linecap="round" stroke-linejoin="round"/><path d="M1260.4 404.5 L1254.3 410.9" fill="none" stroke="#bdbdbd" stroke-width="1.4" stroke-linecap="round" stroke-linejoin="round"/><rect x="2140" y="395.3" width="16.5" height="16.5" rx="2" fill="none" stroke="#cccccc" stroke-width="1.3" stroke-linecap="round" stroke-linejoin="round"/><rect x="2140" y="395.3" width="7" height="16.5" rx="1.5" fill="#cccccc"/><rect x="2172.5" y="395.3" width="16.5" height="16.5" rx="2" fill="none" stroke="#cccccc" stroke-width="1.3" stroke-linecap="round" stroke-linejoin="round"/><path d="M2172.5 406.8 H2189" fill="none" stroke="#cccccc" stroke-width="1.3" stroke-linecap="round" stroke-linejoin="round"/><rect x="2204.7" y="395.3" width="16.5" height="16.5" rx="2" fill="none" stroke="#cccccc" stroke-width="1.3" stroke-linecap="round" stroke-linejoin="round"/><path d="M2215.8 395.3 V411.8" fill="none" stroke="#cccccc" stroke-width="1.3" stroke-linecap="round" stroke-linejoin="round"/><rect x="2238.3" y="396" width="6.5" height="15" rx="1.5" fill="none" stroke="#cccccc" stroke-width="1.3" stroke-linecap="round" stroke-linejoin="round"/><rect x="2248" y="396" width="6.4" height="6" rx="1.5" fill="none" stroke="#cccccc" stroke-width="1.3" stroke-linecap="round" stroke-linejoin="round"/><rect x="2248" y="405" width="6.4" height="6.3" rx="1.5" fill="none" stroke="#cccccc" stroke-width="1.3" stroke-linecap="round" stroke-linejoin="round"/><path d="M311.5 451.5 H305.5 Q304.2 451.5 304.2 452.8 V469.2 Q304.2 470.5 305.5 470.5 H321.3 Q322.6 470.5 322.6 469.2 V462.7" fill="none" stroke="#ffffff" stroke-width="1.9" stroke-linecap="round" stroke-linejoin="round"/><path d="M313 439.9 H324.5 L330.5 445.9 V461.3 Q330.5 462.6 329.2 462.6 H313 Q311.7 462.6 311.7 461.3 V441.2 Q311.7 439.9 313 439.9 Z M324.5 439.9 V445.9 H330.5" fill="none" stroke="#ffffff" stroke-width="1.9" stroke-linecap="round" stroke-linejoin="round"/><circle cx="321.6" cy="511.3" r="9.6" fill="none" stroke="#858585" stroke-width="1.9" stroke-linecap="round" stroke-linejoin="round"/><path d="M314.8 518.1 L304.8 529.8" fill="none" stroke="#858585" stroke-width="2" stroke-linecap="round" stroke-linejoin="round"/><circle cx="310.8" cy="565" r="4.2" fill="none" stroke="#858585" stroke-width="1.9" stroke-linecap="round" stroke-linejoin="round"/><circle cx="310.8" cy="586.5" r="4.2" fill="none" stroke="#858585" stroke-width="1.9" stroke-linecap="round" stroke-linejoin="round"/><circle cx="325.3" cy="570.6" r="4.2" fill="none" stroke="#858585" stroke-width="1.9" stroke-linecap="round" stroke-linejoin="round"/><path d="M310.8 569.2 V582.3 M325.3 574.8 Q325.3 580 318 580.5 Q311.5 581 310.8 582.3" fill="none" stroke="#858585" stroke-width="1.9" stroke-linecap="round" stroke-linejoin="round"/><path d="M312.8 622.5 L332.6 634 L320 641.5" fill="none" stroke="#858585" stroke-width="1.9" stroke-linecap="round" stroke-linejoin="round"/><path d="M312.8 622.5 V634" fill="none" stroke="#858585" stroke-width="1.9" stroke-linecap="round" stroke-linejoin="round"/><ellipse cx="309.8" cy="645" rx="4.6" ry="5.6" fill="none" stroke="#858585" stroke-width="1.9" stroke-linecap="round" stroke-linejoin="round"/><path d="M302.8 641 L305.2 642.3 M302.8 646 H305.2 M303.5 650.5 L305.6 648.5 M316.8 641 L314.4 642.3 M316.8 646 H314.4 M316.1 650.5 L314 648.5" fill="none" stroke="#858585" stroke-width="1.6" stroke-linecap="round" stroke-linejoin="round"/><path d="M303.2 688 H315 V699.5 H303.2 Z M303.2 699.5 V711 H315 V699.5 M315 711 H326.6 V699.5 H315" fill="none" stroke="#858585" stroke-width="1.9" stroke-linecap="round" stroke-linejoin="round"/><rect x="320.3" y="682" width="11.8" height="11.8" rx="1" fill="none" stroke="#858585" stroke-width="1.9" stroke-linecap="round" stroke-linejoin="round"/><path d="M313 743.5 H322.5 M314.5 743.5 V753 L306.8 767.5 Q306.3 769.6 308.5 769.6 H327 Q329.2 769.6 328.7 767.5 L321 753 V743.5 M310.5 760.5 H325" fill="none" stroke="#858585" stroke-width="1.9" stroke-linecap="round" stroke-linejoin="round"/><circle cx="317.7" cy="1384.8" r="14.5" fill="none" stroke="#858585" stroke-width="1.9" stroke-linecap="round" stroke-linejoin="round"/><circle cx="317.7" cy="1379.5" r="6" fill="none" stroke="#858585" stroke-width="1.9" stroke-linecap="round" stroke-linejoin="round"/><path d="M307.5 1395.2 Q310 1388.6 317.7 1388.6 Q325.4 1388.6 327.9 1395.2" fill="none" stroke="#858585" stroke-width="1.9" stroke-linecap="round" stroke-linejoin="round"/><path d="M319.15 1430.07 L322.00 1430.64 L322.65 1435.54 L324.36 1436.68 L329.14 1435.41 L330.75 1437.82 L327.75 1441.75 L328.15 1443.77 L332.43 1446.25 L331.86 1449.10 L326.96 1449.75 L325.82 1451.46 L327.09 1456.24 L324.68 1457.85 L320.75 1454.85 L318.73 1455.25 L316.25 1459.53 L313.40 1458.96 L312.75 1454.06 L311.04 1452.92 L306.26 1454.19 L304.65 1451.78 L307.65 1447.85 L307.25 1445.83 L302.97 1443.35 L303.54 1440.50 L308.44 1439.85 L309.58 1438.14 L308.31 1433.36 L310.72 1431.75 L314.65 1434.75 L316.67 1434.35 Z" fill="none" stroke="#858585" stroke-width="1.8" stroke-linecap="round" stroke-linejoin="round"/><circle cx="317.7" cy="1444.8" r="3.8" fill="none" stroke="#858585" stroke-width="1.8" stroke-linecap="round" stroke-linejoin="round"/><circle cx="560.5" cy="447.5" r="1.25" fill="#c5c5c5"/><circle cx="567.3" cy="447.5" r="1.25" fill="#c5c5c5"/><circle cx="574.1" cy="447.5" r="1.25" fill="#c5c5c5"/><path d="M354.6 481 L360.4 486.9 L366.2 481" fill="none" stroke="#c5c5c5" stroke-width="1.2" stroke-linecap="round" stroke-linejoin="round"/><path d="M373.6 635.6500000000001 V690.8" stroke="#585858" stroke-width="1"/><path d="M374.6 505.59999999999997 L380.6 511.7 L374.6 517.8" fill="none" stroke="#c5c5c5" stroke-width="1.2" stroke-linecap="round" stroke-linejoin="round"/><path d="M374.6 533.15 L380.6 539.25 L374.6 545.35" fill="none" stroke="#c5c5c5" stroke-width="1.2" stroke-linecap="round" stroke-linejoin="round"/><path d="M374.6 560.6999999999999 L380.6 566.8 L374.6 572.9" fill="none" stroke="#c5c5c5" stroke-width="1.2" stroke-linecap="round" stroke-linejoin="round"/><path d="M374.6 588.25 L380.6 594.35 L374.6 600.45" fill="none" stroke="#c5c5c5" stroke-width="1.2" stroke-linecap="round" stroke-linejoin="round"/><path d="M370.8 618.8 L376.8 625.0 L382.8 618.8" fill="none" stroke="#c5c5c5" stroke-width="1.2" stroke-linecap="round" stroke-linejoin="round"/><path d="M374.6 698.4499999999999 L380.6 704.55 L374.6 710.65" fill="none" stroke="#c5c5c5" stroke-width="1.2" stroke-linecap="round" stroke-linejoin="round"/><path d="M374.6 726.0 L380.6 732.1 L374.6 738.2" fill="none" stroke="#c5c5c5" stroke-width="1.2" stroke-linecap="round" stroke-linejoin="round"/><path d="M374.6 753.55 L380.6 759.65 L374.6 765.75" fill="none" stroke="#c5c5c5" stroke-width="1.2" stroke-linecap="round" stroke-linejoin="round"/><path d="M374.6 781.1 L380.6 787.2 L374.6 793.3000000000001" fill="none" stroke="#c5c5c5" stroke-width="1.2" stroke-linecap="round" stroke-linejoin="round"/><path d="M374.6 808.65 L380.6 814.75 L374.6 820.85" fill="none" stroke="#c5c5c5" stroke-width="1.2" stroke-linecap="round" stroke-linejoin="round"/><path d="M374.6 836.1999999999999 L380.6 842.3 L374.6 848.4" fill="none" stroke="#c5c5c5" stroke-width="1.2" stroke-linecap="round" stroke-linejoin="round"/><path d="M374.6 863.75 L380.6 869.85 L374.6 875.95" fill="none" stroke="#c5c5c5" stroke-width="1.2" stroke-linecap="round" stroke-linejoin="round"/><path d="M374.6 891.3 L380.6 897.4 L374.6 903.5" fill="none" stroke="#c5c5c5" stroke-width="1.2" stroke-linecap="round" stroke-linejoin="round"/><path d="M374.6 918.85 L380.6 924.95 L374.6 931.0500000000001" fill="none" stroke="#c5c5c5" stroke-width="1.2" stroke-linecap="round" stroke-linejoin="round"/><path d="M374.6 946.4 L380.6 952.5 L374.6 958.6" fill="none" stroke="#c5c5c5" stroke-width="1.2" stroke-linecap="round" stroke-linejoin="round"/><path d="M374.6 973.9499999999999 L380.6 980.05 L374.6 986.15" fill="none" stroke="#c5c5c5" stroke-width="1.2" stroke-linecap="round" stroke-linejoin="round"/><rect x="379.5" y="642.5" width="10.5" height="14" rx="1.6" fill="#519aba"/><rect x="381.5" y="644.5" width="6.5" height="2.2" fill="#1e1e1e" opacity="0.55"/><path d="M391.0 644.5 V654.5" stroke="#519aba" stroke-width="1" stroke-dasharray="1.2 1.2"/><circle cx="385" cy="677.0" r="6.6" fill="none" stroke="#519aba" stroke-width="1.3"/><circle cx="385" cy="673.8" r="0.9" fill="#519aba"/><path d="M383.4 676.2 H385.4 V680.6 M383.2 680.8 H387" stroke="#519aba" stroke-width="1.2" fill="none"/><circle cx="374.8" cy="1062.7" r="6.6" fill="none" stroke="#519aba" stroke-width="1.3"/><circle cx="374.8" cy="1059.5" r="0.9" fill="#519aba"/><path d="M373.2 1061.9 H375.2 V1066.3 M373.0 1066.5 H376.8" stroke="#519aba" stroke-width="1.2" fill="none"/><path d="M374.9 1000.6 L381.9 1007.6 L374.9 1014.6 L367.9 1007.6 Z" fill="#41535b"/><circle cx="373.5" cy="1006.1" r="1.3" fill="#1e1e1e" opacity="0.6"/><circle cx="376.5" cy="1009.6" r="1.3" fill="#1e1e1e" opacity="0.6"/><path d="M370 1028.15 H380 V1034.15 L383 1034.15 L375 1042.65 L367 1034.15 L370 1034.15 Z" fill="#519aba"/><path d="M371.5 1029.15 L375 1032.65 L378.5 1029.15" stroke="#1e1e1e" stroke-width="1" fill="none" opacity="0.5"/><path d="M357.8 1429.6 L363 1434.8 L357.8 1440" fill="none" stroke="#c5c5c5" stroke-width="1.3" stroke-linecap="round" stroke-linejoin="round"/><path d="M357.8 1457.4 L363 1462.6 L357.8 1467.8" fill="none" stroke="#c5c5c5" stroke-width="1.3" stroke-linecap="round" stroke-linejoin="round"/><rect x="614.8" y="440.5" width="10.5" height="13.8" rx="1.6" fill="#519aba"/><rect x="616.8" y="442.5" width="6.5" height="2.2" fill="#1e1e1e" opacity="0.55"/><path d="M626.3 442.5 V452.3" stroke="#519aba" stroke-width="1" stroke-dasharray="1.2 1.2"/><path d="M1000.3 442.5 L1011.2 453.4 M1011.2 442.5 L1000.3 453.4" fill="none" stroke="#cccccc" stroke-width="1.4" stroke-linecap="round" stroke-linejoin="round"/><path d="M2179.05 438.84 L2180.73 439.17 L2181.12 442.03 L2182.13 442.71 L2184.93 441.98 L2185.87 443.40 L2184.13 445.70 L2184.37 446.89 L2186.86 448.35 L2186.53 450.03 L2183.67 450.42 L2182.99 451.43 L2183.72 454.23 L2182.30 455.17 L2180.00 453.43 L2178.81 453.67 L2177.35 456.16 L2175.67 455.83 L2175.28 452.97 L2174.27 452.29 L2171.47 453.02 L2170.53 451.60 L2172.27 449.30 L2172.03 448.11 L2169.54 446.65 L2169.87 444.97 L2172.73 444.58 L2173.41 443.57 L2172.68 440.77 L2174.10 439.83 L2176.40 441.57 L2177.59 441.33 Z" fill="none" stroke="#cccccc" stroke-width="1.2" stroke-linecap="round" stroke-linejoin="round"/><circle cx="2178.2" cy="447.5" r="2.3" fill="none" stroke="#cccccc" stroke-width="1.2" stroke-linecap="round" stroke-linejoin="round"/><rect x="2203.5" y="439" width="16.5" height="15.8" rx="1.5" fill="none" stroke="#cccccc" stroke-width="1.3" stroke-linecap="round" stroke-linejoin="round"/><path d="M2211.7 439 V454.8" fill="none" stroke="#cccccc" stroke-width="1.3" stroke-linecap="round" stroke-linejoin="round"/><circle cx="2236.6" cy="447.8" r="1.25" fill="#cccccc"/><circle cx="2243.3" cy="447.8" r="1.25" fill="#cccccc"/><circle cx="2250" cy="447.8" r="1.25" fill="#cccccc"/><path d="M694.3 477.6 L700.3 483.6 L694.3 489.6" fill="none" stroke="#a8a8a8" stroke-width="1.2" stroke-linecap="round" stroke-linejoin="round"/><rect x="712.2" y="477" width="10.5" height="13.8" rx="1.6" fill="#519aba"/><rect x="714.2" y="479" width="6.5" height="2.2" fill="#1e1e1e" opacity="0.55"/><path d="M723.7 479 V488.8" stroke="#519aba" stroke-width="1" stroke-dasharray="1.2 1.2"/><path d="M1104.6 477.6 L1110.6 483.6 L1104.6 489.6" fill="none" stroke="#a8a8a8" stroke-width="1.2" stroke-linecap="round" stroke-linejoin="round"/><path d="M1130.0 480.3 V488.8 M1127.2 486.0 L1130.0 489.3 L1132.8000000000002 486.0" fill="none" stroke="#a8a8a8" stroke-width="1.5" stroke-linecap="round" stroke-linejoin="round"/><path d="M1635.4 477.6 L1641.4 483.6 L1635.4 489.6" fill="none" stroke="#a8a8a8" stroke-width="1.2" stroke-linecap="round" stroke-linejoin="round"/><path d="M1662.1 480.3 V488.8 M1659.3 486.0 L1662.1 489.3 L1664.9 486.0" fill="none" stroke="#a8a8a8" stroke-width="1.5" stroke-linecap="round" stroke-linejoin="round"/><path d="M1796.4 477.6 L1802.4 483.6 L1796.4 489.6" fill="none" stroke="#a8a8a8" stroke-width="1.2" stroke-linecap="round" stroke-linejoin="round"/><path d="M1823.6 480.3 V488.8 M1820.8 486.0 L1823.6 489.3 L1826.4 486.0" fill="none" stroke="#a8a8a8" stroke-width="1.5" stroke-linecap="round" stroke-linejoin="round"/><path d="M2180.5 477.6 L2186.5 483.6 L2180.5 489.6" fill="none" stroke="#a8a8a8" stroke-width="1.2" stroke-linecap="round" stroke-linejoin="round"/><path d="M2207.2 480.3 V488.8 M2204.4 486.0 L2207.2 489.3 L2210.0 486.0" fill="none" stroke="#a8a8a8" stroke-width="1.5" stroke-linecap="round" stroke-linejoin="round"/><path d="M618.2 505 V520.8 M610.3 512.9 H626.1" fill="none" stroke="#cccccc" stroke-width="1.3" stroke-linecap="round" stroke-linejoin="round"/><path d="M703.5 505 V520.8 M695.6 512.9 H711.4" fill="none" stroke="#cccccc" stroke-width="1.3" stroke-linecap="round" stroke-linejoin="round"/><path d="M831.8 505.5 L845 514 L831.8 522.5 Z M836.5 507.5 L847.2 514 L836.5 520.5" fill="none" stroke="#cccccc" stroke-width="1.2" stroke-linecap="round" stroke-linejoin="round"/><path d="M928 507.5 H945 M928 511 H945 M928 514.5 H938 M928 518 H935 M928 521.3 H935 M939.5 516.5 L944.5 521.5 M944.5 516.5 L939.5 521.5" fill="none" stroke="#cccccc" stroke-width="1.1" stroke-linecap="round" stroke-linejoin="round"/><path d="M1113.6 507.6 H1114.6 M1113.6 511.3 H1114.6 M1113.6 515 H1114.6 M1113.6 518.7 H1114.6 M1113.6 522.3 H1114.6 M1117.5 507.6 H1130 M1117.5 511.3 H1130 M1117.5 515 H1130 M1117.5 518.7 H1130 M1117.5 522.3 H1130" fill="none" stroke="#cccccc" stroke-width="1.2" stroke-linecap="round" stroke-linejoin="round"/><circle cx="1215" cy="514" r="1.2" fill="#cccccc"/><circle cx="1221.5" cy="514" r="1.2" fill="#cccccc"/><circle cx="1228" cy="514" r="1.2" fill="#cccccc"/><path d="M2133.5 506 H2142.5 V520.5 H2133.5 Z M2134.8 509 H2141.2 M2134.8 516.5 H2141.2 M2129.8 523.5 Q2129.8 520.5 2132 520.5 H2144 Q2146.3 520.5 2146.3 523.5" fill="none" stroke="#cccccc" stroke-width="1.2" stroke-linecap="round" stroke-linejoin="round"/><path d="M615.2 726.4 L627 733.6 L615.2 740.8 Z" fill="none" stroke="#cccccc" stroke-width="1.3" stroke-linecap="round" stroke-linejoin="round"/><path d="M637.4 731.2 L641.4 735.4 L645.4 731.2" fill="none" stroke="#a0a0a0" stroke-width="1.1" stroke-linecap="round" stroke-linejoin="round"/><path d="M2024.5 704.5 L2032.5 709.8 L2024.5 715.1 Z M2033.5 706.3 H2041.5 M2036 710.5 H2041.5 M2033.5 714.6 H2041.5 M2032 718.3 H2041.5" fill="none" stroke="#cccccc" stroke-width="1.1" stroke-linecap="round" stroke-linejoin="round"/><path d="M2059.5 704 L2071 711 L2059.5 718 Z M2073.5 717.8 V710 M2070.8 712.6 L2073.5 709.8 L2076.2 712.6" fill="none" stroke="#cccccc" stroke-width="1.1" stroke-linecap="round" stroke-linejoin="round"/><path d="M2094.5 704 L2106 711 L2094.5 718 Z M2108.5 708.5 V717 M2105.8 714.3 L2108.5 717.2 L2111.2 714.3" fill="none" stroke="#cccccc" stroke-width="1.1" stroke-linecap="round" stroke-linejoin="round"/><rect x="2131" y="703.5" width="16" height="15.2" rx="1.8" fill="none" stroke="#cccccc" stroke-width="1.2" stroke-linecap="round" stroke-linejoin="round"/><path d="M2131 711 H2147" fill="none" stroke="#cccccc" stroke-width="1.2" stroke-linecap="round" stroke-linejoin="round"/><circle cx="2162.5" cy="711.3" r="1.2" fill="#cccccc"/><circle cx="2169.3" cy="711.3" r="1.2" fill="#cccccc"/><circle cx="2176.1" cy="711.3" r="1.2" fill="#cccccc"/><path d="M2194 706.5 H2206.5 M2197.8 706.5 V704.3 H2202.8 V706.5 M2195.2 706.5 L2196 718.5 H2204.5 L2205.3 706.5 M2198.5 709 V716 M2200.2 709 V716 M2202 709 V716" fill="none" stroke="#cccccc" stroke-width="1.1" stroke-linecap="round" stroke-linejoin="round"/><circle cx="618" cy="924.5" r="1.2" fill="#cccccc"/><circle cx="625" cy="924.5" r="1.2" fill="#cccccc"/><circle cx="632" cy="924.5" r="1.2" fill="#cccccc"/><path d="M303.5 1485 L308 1489.5 L303.5 1494 M314.5 1482.5 L310 1487 L314.5 1491.5" fill="none" stroke="#ffffff" stroke-width="1.3" stroke-linecap="round" stroke-linejoin="round"/><circle cx="343.2" cy="1484" r="2.7" fill="none" stroke="#ffffff" stroke-width="1.3" stroke-linecap="round" stroke-linejoin="round"/><circle cx="343.2" cy="1494.4" r="2.7" fill="none" stroke="#ffffff" stroke-width="1.3" stroke-linecap="round" stroke-linejoin="round"/><circle cx="350.6" cy="1487" r="2.7" fill="none" stroke="#ffffff" stroke-width="1.3" stroke-linecap="round" stroke-linejoin="round"/><path d="M343.2 1486.7 V1491.7 M350.6 1489.7 Q350.6 1492 346 1492.3 Q343.5 1492.5 343.2 1491.7" fill="none" stroke="#ffffff" stroke-width="1.3" stroke-linecap="round" stroke-linejoin="round"/><path d="M403 1487 Q404.5 1482.5 410 1482.5 Q415.5 1482.5 417.5 1487 M417.5 1491.5 Q416 1496 410 1496 Q404.5 1496 402.5 1491.5 M414.5 1487.3 H418 V1483.8 M405.5 1491.2 H402 V1494.7" fill="none" stroke="#ffffff" stroke-width="1.3" stroke-linecap="round" stroke-linejoin="round"/><circle cx="444.7" cy="1488.7" r="7.3" fill="none" stroke="#ffffff" stroke-width="1.3" stroke-linecap="round" stroke-linejoin="round"/><path d="M441.8 1485.8 L447.6 1491.6 M447.6 1485.8 L441.8 1491.6" fill="none" stroke="#ffffff" stroke-width="1.3" stroke-linecap="round" stroke-linejoin="round"/><path d="M480.4 1481.5 L488 1495.7 H472.8 Z M480.4 1486.3 V1491 M480.4 1493 V1493.6" fill="none" stroke="#ffffff" stroke-width="1.3" stroke-linecap="round" stroke-linejoin="round"/><circle cx="2111.9" cy="1487" r="1.8" fill="#ffffff"/><path d="M2107.6 1491.3 A6 6 0 1 1 2116.2 1491.3 M2109.3 1489.5 A3.5 3.5 0 1 1 2114.5 1489.5" fill="none" stroke="#ffffff" stroke-width="1.2" stroke-linecap="round" stroke-linejoin="round"/><path d="M2111.9 1489 V1496.8" fill="none" stroke="#ffffff" stroke-width="2" stroke-linecap="round" stroke-linejoin="round"/><path d="M2200 1497 Q2200.5 1490 2206 1490 Q2210 1490 2211 1494 M2206 1489.8 A3.8 3.8 0 1 1 2206 1482.2 A3.8 3.8 0 1 1 2206 1489.8 M2209.5 1481.5 H2216 V1487.5 H2213 L2211.2 1489.5" fill="none" stroke="#ffffff" stroke-width="1.2" stroke-linecap="round" stroke-linejoin="round"/><path d="M2238.2 1493.5 H2250.2 L2248.6 1491 V1486.5 Q2248.6 1481.3 2244.2 1481.3 Q2239.8 1481.3 2239.8 1486.5 V1491 Z M2242.4 1496 Q2244.2 1497.8 2246 1496" fill="none" stroke="#ffffff" stroke-width="1.2" stroke-linecap="round" stroke-linejoin="round"/></svg>
</div>
<div style="position:absolute;left:0.0px;top:1560.3px;width:510.3px;height:42px;background:#8ecae6;z-index:5"></div><div style="position:absolute;left:509.8px;top:1560.3px;width:510.3px;height:42px;background:#219ebc;z-index:5"></div><div style="position:absolute;left:1019.6px;top:1560.3px;width:510.3px;height:42px;background:#023047;z-index:5"></div><div style="position:absolute;left:1529.4px;top:1560.3px;width:510.3px;height:42px;background:#ffb703;z-index:5"></div><div style="position:absolute;left:2039.2px;top:1560.3px;width:520.8px;height:42px;background:#fb8500;z-index:5"></div>
</body></html>
